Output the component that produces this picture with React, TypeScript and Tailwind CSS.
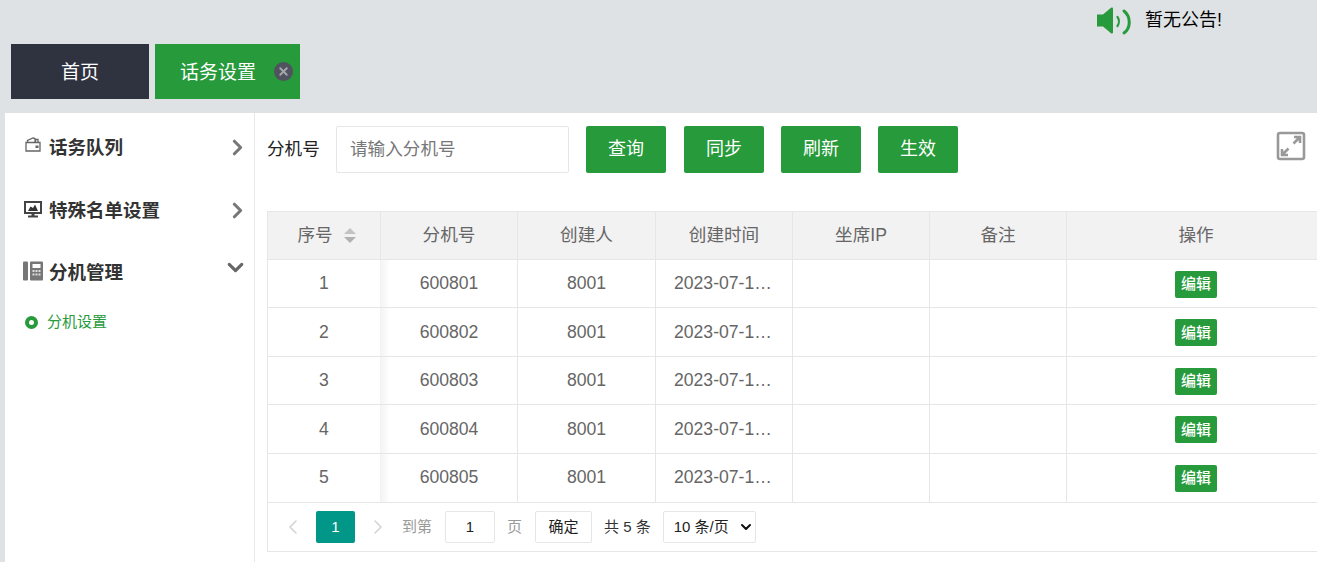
import React from "react";
import { ChevronRight, ChevronDown, ChevronLeft, X } from "lucide-react";

const font = { fontFamily: '"Liberation Sans","Noto Sans CJK SC",sans-serif' };

const rows = [
  ["1", "600801"],
  ["2", "600802"],
  ["3", "600803"],
  ["4", "600804"],
  ["5", "600805"],
];
const cols = ["w-[137px]", "w-[138px]", "w-[137px]", "w-[137px]", "w-[137px]"];
const heads = ["分机号", "创建人", "创建时间", "坐席IP", "备注"];

function Wallet() {
  return (
    <svg width="16" height="15" viewBox="0 0 16 15" fill="none" stroke="#666" strokeWidth="1.3" className="-mt-[7px]">
      <path d="M1 5.500h14v8.500H1z" />
      <path d="M2.500 5.500V3.500L8 1l2 .5V5.500M10.500 5.500V2.500h2.500v3" />
      <rect x="10.500" y="8.500" width="3" height="2.500" fill="#666" stroke="none" />
    </svg>
  );
}
function Monitor() {
  return (
    <svg width="18" height="17" viewBox="0 0 18 17" className="-mt-[3px]">
      <path d="M1 1h16v11H1z" fill="#fff" stroke="#444" strokeWidth="2" />
      <path d="M4 10l2.500-4.500L9 7l2-3.500L14 10z" fill="#333" />
      <path d="M4 14.500h10v2H4z" fill="#444" />
      <path d="M7.500 12h3v3h-3z" fill="#444" />
    </svg>
  );
}
function Phone() {
  return (
    <svg width="20" height="20" viewBox="0 0 20 20" className="-mt-[5px]">
      <rect x="0" y="0.500" width="5" height="19" rx="1" fill="#777" />
      <rect x="7" y="0.500" width="13" height="19" rx="1" fill="#777" />
      <rect x="9.500" y="3" width="8" height="4" fill="#fff" />
      <g fill="#ddd">
        <rect x="9.500" y="9" width="2" height="2" />
        <rect x="12.500" y="9" width="2" height="2" />
        <rect x="15.500" y="9" width="2" height="2" />
        <rect x="9.500" y="12.500" width="2" height="2" />
        <rect x="12.500" y="12.500" width="2" height="2" />
        <rect x="15.500" y="12.500" width="2" height="2" />
      </g>
    </svg>
  );
}
function Speaker() {
  return (
    <svg width="36" height="30" viewBox="0 0 36 30" fill="none">
      <path d="M1 7.500h6L15 .8c1-.7 2-.3 2 1v23.400c0 1.300-1 1.700-2 1L7 19.500H1z" fill="#279a3b" />
      <path d="M21.500 10c1.800 2.500 1.800 6.500 0 9" stroke="#279a3b" strokeWidth="2.200" strokeLinecap="round" />
      <path d="M28 4c7 5.500 7 17 0 22" stroke="#279a3b" strokeWidth="3" strokeLinecap="round" />
    </svg>
  );
}
function Expand() {
  return (
    <svg width="30" height="30" viewBox="0 0 30 30" fill="none" stroke="#999" strokeWidth="2.600">
      <rect x="2" y="2" width="26" height="26" rx="2" />
      <path d="M17.500 12.500L24 6M18 6h6v6M12.500 17.500L6 24M6 18v6h6" />
    </svg>
  );
}

function MenuItem({ icon, label, open }: { icon: React.ReactNode; label: string; open?: boolean }) {
  return (
    <div className="flex items-center h-[62.500px] pl-[18px] pr-[4px]">
      <span className="flex justify-center w-[20px]">{icon}</span>
      <span className="ml-[6px] flex-1 text-[18.500px] font-bold text-[#333]">{label}</span>
      {open ? (
        <ChevronDown size={25} strokeWidth={3} className="text-[#666] -mt-[11px] mr-[2px]" />
      ) : (
        <ChevronRight size={25} strokeWidth={3} className="text-[#777] -mt-[1px]" />
      )}
    </div>
  );
}

function Btn({ children }: { children: React.ReactNode }) {
  return (
    <button className="w-[80px] h-[47px] bg-[#279a3b] text-white text-[18px] rounded-[2px]">{children}</button>
  );
}

export default function App() {
  return (
    <div className="w-[1317px] h-[562px] overflow-hidden bg-[#dfe2e5] flex flex-col" style={font}>
      <div className="h-[44px] flex items-center pl-[1096px] shrink-0">
        <Speaker />
        <span className="ml-[13px] -mt-[4px] text-[18px] text-black">暂无公告!</span>
      </div>
      <div className="h-[69px] shrink-0 flex items-start pl-[11px] gap-[6px]">
        <div className="w-[138px] h-[55px] bg-[#2f3340] text-white text-[19px] flex items-center justify-center pt-[3px]">首页</div>
        <div className="w-[145px] h-[55px] bg-[#279a3b] text-white text-[19px] flex items-center pl-[25px]">
          <span className="mt-[3px]">话务设置</span>
          <span className="ml-[18px] w-[19px] h-[19px] rounded-full bg-[#50525f] flex items-center justify-center">
            <X size={13} strokeWidth={3.500} className="text-[#a5a7ae]" />
          </span>
        </div>
      </div>
      <div className="flex-1 ml-[5px] bg-white flex min-h-0">
        <aside className="w-[250px] shrink-0 border-r border-[#e8e8e8] pt-[4px]">
          <MenuItem icon={<Wallet />} label="话务队列" />
          <MenuItem icon={<Monitor />} label="特殊名单设置" />
          <MenuItem icon={<Phone />} label="分机管理" open />
          <div className="flex items-center pl-[20px] mt-[2px] h-[32px]">
            <span className="w-[13px] h-[13px] rounded-full border-[4px] border-[#279a3b]"></span>
            <span className="ml-[9px] text-[15px] text-[#279a3b]">分机设置</span>
          </div>
        </aside>
        <main className="flex-1 min-w-0 pl-[12px] pt-[13px]">
          <div className="flex items-center h-[47px] relative">
            <span className="text-[17.600px] text-[#222] w-[69px]">分机号</span>
            <div className="w-[233px] h-[47px] border border-[#e6e6e6] rounded-[2px] flex items-center pl-[13px] text-[17.600px] text-[#777]">
              请输入分机号
            </div>
            <div className="ml-[17px] flex gap-[17px]">
              <Btn>查询</Btn>
              <span className="ml-[1px]">
                <Btn>同步</Btn>
              </span>
              <Btn>刷新</Btn>
              <Btn>生效</Btn>
            </div>
            <span className="absolute right-[11px] top-[5px]">
              <Expand />
            </span>
          </div>
          <div className="mt-[38px] w-[1058px] border border-[#e6e6e6] border-r-0">
            <table className="w-full table-fixed border-collapse text-[17.600px] text-[#666] relative">
              <thead>
                <tr className="h-[47px] bg-[#f2f2f2]">
                  <th className="w-[112.500px] font-normal border-r border-[#e6e6e6]">
                    <span className="inline-flex items-center ml-[5px]">
                      序号
                      <span className="ml-[11px] flex flex-col gap-[3px]">
                        <span className="w-0 h-0 border-x-[6px] border-x-transparent border-b-[6px] border-b-[#c2c2c2]"></span>
                        <span className="w-0 h-0 border-x-[6px] border-x-transparent border-t-[6px] border-t-[#b2b2b2]"></span>
                      </span>
                    </span>
                  </th>
                  {heads.map((h, i) => (
                    <th key={h} className={`${cols[i]} font-normal border-x border-[#e6e6e6]`}>{h}</th>
                  ))}
                  <th className="font-normal border-l border-[#e6e6e6]">操作</th>
                </tr>
              </thead>
              <tbody>
                {rows.map(([n, ext]) => (
                  <tr key={n} className="h-[48.500px] border-t border-[#e6e6e6]">
                    <td className="text-center border-r border-[#e6e6e6] relative">
                      {n}
                      <span className="absolute top-0 bottom-0 left-full w-[10px] bg-gradient-to-r from-[#f3f3f3] to-transparent"></span>
                    </td>
                    <td className="text-center border-x border-[#e6e6e6]">{ext}</td>
                    <td className="text-center border-x border-[#e6e6e6]">8001</td>
                    <td className="border-x border-[#e6e6e6] px-[18px]">
                      <div className="truncate">2023-07-14 10:00:00</div>
                    </td>
                    <td className="border-x border-[#e6e6e6]"></td>
                    <td className="border-x border-[#e6e6e6]"></td>
                    <td className="border-l border-[#e6e6e6] text-center">
                      <span className="inline-flex items-center justify-center w-[42px] h-[27px] mt-[2px] rounded-[2px] bg-[#279a3b] text-white text-[15px] font-medium align-middle">编辑</span>
                    </td>
                  </tr>
                ))}
              </tbody>
            </table>
            <div className="h-[49.500px] border-t border-[#e6e6e6] flex items-center pl-[13px] text-[15px]">
              <ChevronLeft size={24} strokeWidth={1.500} className="text-[#d2d2d2]" />
              <span className="ml-[11px] w-[39px] h-[32px] rounded-[2px] bg-[#009688] text-white flex items-center justify-center">1</span>
              <ChevronRight size={24} strokeWidth={1.500} className="ml-[11px] text-[#d2d2d2]" />
              <span className="ml-[12px] text-[#999]">到第</span>
              <span className="ml-[13px] w-[50px] h-[32px] border border-[#e6e6e6] rounded-[2px] flex items-center justify-center text-[#222]">1</span>
              <span className="ml-[12px] text-[#999]">页</span>
              <span className="ml-[13px] w-[57px] h-[32px] border border-[#e6e6e6] rounded-[2px] flex items-center justify-center text-[#222]">确定</span>
              <span className="ml-[12px] text-[#333]">共 5 条</span>
              <span className="ml-[12px] w-[93px] h-[32px] border border-[#e6e6e6] rounded-[2px] flex items-center pl-[10px] text-[#222]">
                10 条/页
                <ChevronDown size={16} strokeWidth={3} className="ml-[9px] text-[#111]" />
              </span>
            </div>
          </div>
        </main>
      </div>
    </div>
  );
}
